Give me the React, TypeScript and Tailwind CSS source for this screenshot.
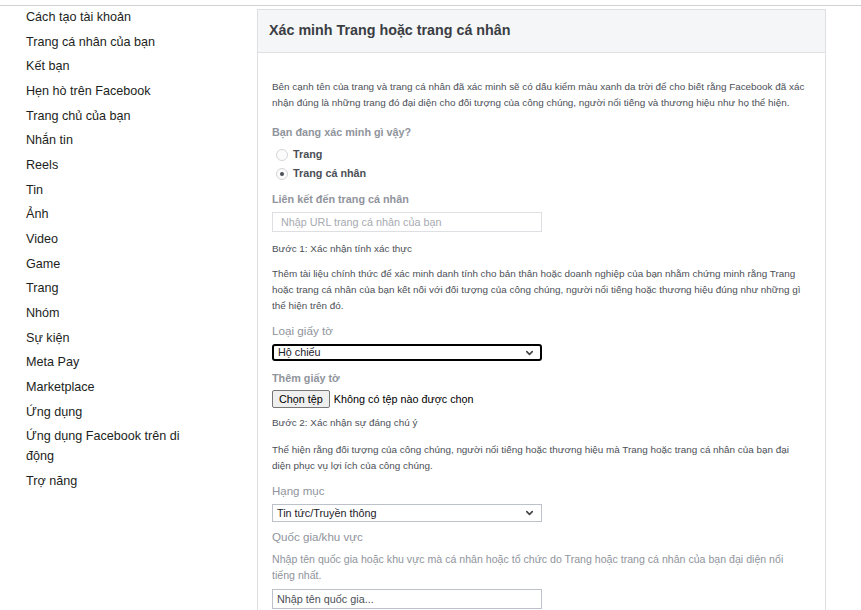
import { ChevronDown } from 'lucide-react';

const navItems = [
  'Cách tạo tài khoản',
  'Trang cá nhân của bạn',
  'Kết bạn',
  'Hẹn hò trên Facebook',
  'Trang chủ của bạn',
  'Nhắn tin',
  'Reels',
  'Tin',
  'Ảnh',
  'Video',
  'Game',
  'Trang',
  'Nhóm',
  'Sự kiện',
  'Meta Pay',
  'Marketplace',
  'Ứng dụng',
  'Ứng dụng Facebook trên di động',
  'Trợ năng',
];

function Label({ children, className = '' }: { children: React.ReactNode; className?: string }) {
  return <div className={`leading-4 text-[#90949c] ${className}`}>{children}</div>;
}

function Radio({ checked, label }: { checked?: boolean; label: string }) {
  return (
    <label className="flex items-center h-[19px] pl-[4px]">
      <span className="flex items-center justify-center size-[12px] rounded-full border border-[#d3d5d9] bg-[#fbfbfb]">
        {checked && <span className="size-[4px] rounded-full bg-[#4b4f56]" />}
      </span>
      <span className="ml-[5px] text-[10.8px] font-bold text-[#4b4f56]">{label}</span>
    </label>
  );
}

function Select({ value, focused }: { value: string; focused?: boolean }) {
  return (
    <div className="relative w-[270px]">
      <select
        defaultValue={value}
        className={`block w-full appearance-none bg-white pl-[4px] text-[10.8px] text-[#1d2129] outline-none ${
          focused ? 'h-[17px] border-2 border-black rounded-[3px] leading-[13px]' : 'h-[18px] border border-[#bdc1c9] leading-[16px]'
        }`}
      >
        <option>{value}</option>
      </select>
      <ChevronDown
        className="absolute right-[7px] top-1/2 -translate-y-1/2 size-[11px] text-[#444]"
        strokeWidth={3.5}
      />
    </div>
  );
}

export default function App() {
  return (
    <div className="w-[861px] h-[610px] overflow-hidden bg-white font-['Liberation_Sans',Arial,sans-serif]">
      <div className="mt-[5px] border-t border-[#cfd1d5]" />
      <div className="flex">
        {/* Sidebar */}
        <nav className="w-[257px] shrink-0 pt-[1px] pl-[26px] pr-[50px]">
          <ul className="flex flex-col gap-[4.67px]">
            {navItems.map((item) => (
              <li key={item} className="text-[12.6px] leading-5 text-[#1c1e21] w-[170px]">
                {item}
              </li>
            ))}
          </ul>
        </nav>

        {/* Card */}
        <div className="mt-[3px] w-[569px] border border-[#dddfe2] bg-white">
          <div className="h-[43px] flex items-center px-[11px] bg-[#f5f6f7] border-b border-[#dddfe2]">
            <h2 className="text-[14.3px] font-bold text-[#3a3d43]">Xác minh Trang hoặc trang cá nhân</h2>
          </div>

          <div className="px-[14px] pb-6">
            <p className="mt-[26px] w-[534px] text-[9.9px] leading-4 text-[#4b4f56]">
              Bên cạnh tên của trang và trang cá nhân đã xác minh sẽ có dấu kiểm màu xanh da trời để cho biết rằng Facebook đã xác nhận đúng là những trang đó đại diện cho đối tượng của công chúng, người nổi tiếng và thương hiệu như họ thể hiện.
            </p>

            <Label className="mt-[13px] text-[10.8px] font-bold">Bạn đang xác minh gì vậy?</Label>
            <div className="mt-[5px]">
              <Radio label="Trang" />
              <Radio label="Trang cá nhân" checked />
            </div>

            <Label className="mt-[8px] text-[10.8px] font-bold">Liên kết đến trang cá nhân</Label>
            <input
              placeholder="Nhập URL trang cá nhân của bạn"
              className="mt-[5px] block w-[270px] h-[20px] px-[8px] border border-[#dddfe2] text-[10.8px] placeholder:text-[#a7aab0] outline-none"
            />

            <div className="mt-[9px] text-[9.9px] leading-4 text-[#4b4f56]">Bước 1: Xác nhận tính xác thực</div>
            <p className="mt-[9px] w-[534px] text-[9.9px] leading-4 text-[#4b4f56]">
              Thêm tài liệu chính thức để xác minh danh tính cho bản thân hoặc doanh nghiệp của bạn nhằm chứng minh rằng Trang hoặc trang cá nhân của bạn kết nối với đối tượng của công chúng, người nổi tiếng hoặc thương hiệu đúng như những gì thể hiện trên đó.
            </p>

            <Label className="mt-[9px] text-[11.7px]">Loại giấy tờ</Label>
            <div className="mt-[5px]">
              <Select value="Hộ chiếu" focused />
            </div>

            <Label className="mt-[9px] text-[10.8px] font-bold">Thêm giấy tờ</Label>
            <div className="mt-[4px] flex items-center h-[18px]">
              <button className="h-[18px] px-[6px] border border-[#767676] rounded-[2px] bg-[#efefef] text-[10.8px] text-black leading-none">
                Chọn tệp
              </button>
              <span className="ml-[4px] text-[10.8px] text-black">Không có tệp nào được chọn</span>
            </div>

            <div className="mt-[7px] text-[9.9px] leading-4 text-[#4b4f56]">Bước 2: Xác nhận sự đáng chú ý</div>
            <p className="mt-[11px] w-[534px] text-[9.9px] leading-4 text-[#4b4f56]">
              Thể hiện rằng đối tượng của công chúng, người nổi tiếng hoặc thương hiệu mà Trang hoặc trang cá nhân của bạn đại diện phục vụ lợi ích của công chúng.
            </p>

            <Label className="mt-[9px] text-[11.5px]">Hạng mục</Label>
            <div className="mt-[5px]">
              <Select value="Tin tức/Truyền thông" />
            </div>

            <Label className="mt-[7px] text-[11.6px]">Quốc gia/khu vực</Label>
            <p className="mt-[6px] w-[534px] text-[10.6px] leading-4 text-[#90949c]">
              Nhập tên quốc gia hoặc khu vực mà cá nhân hoặc tổ chức do Trang hoặc trang cá nhân của bạn đại diện nổi tiếng nhất.
            </p>
            <input
              placeholder="Nhập tên quốc gia..."
              className="mt-[6px] block w-[270px] h-[20px] px-[4px] border border-[#bdc1c9] text-[10.8px] placeholder:text-[#4b4f56] outline-none"
            />
          </div>
        </div>
      </div>
    </div>
  );
}
